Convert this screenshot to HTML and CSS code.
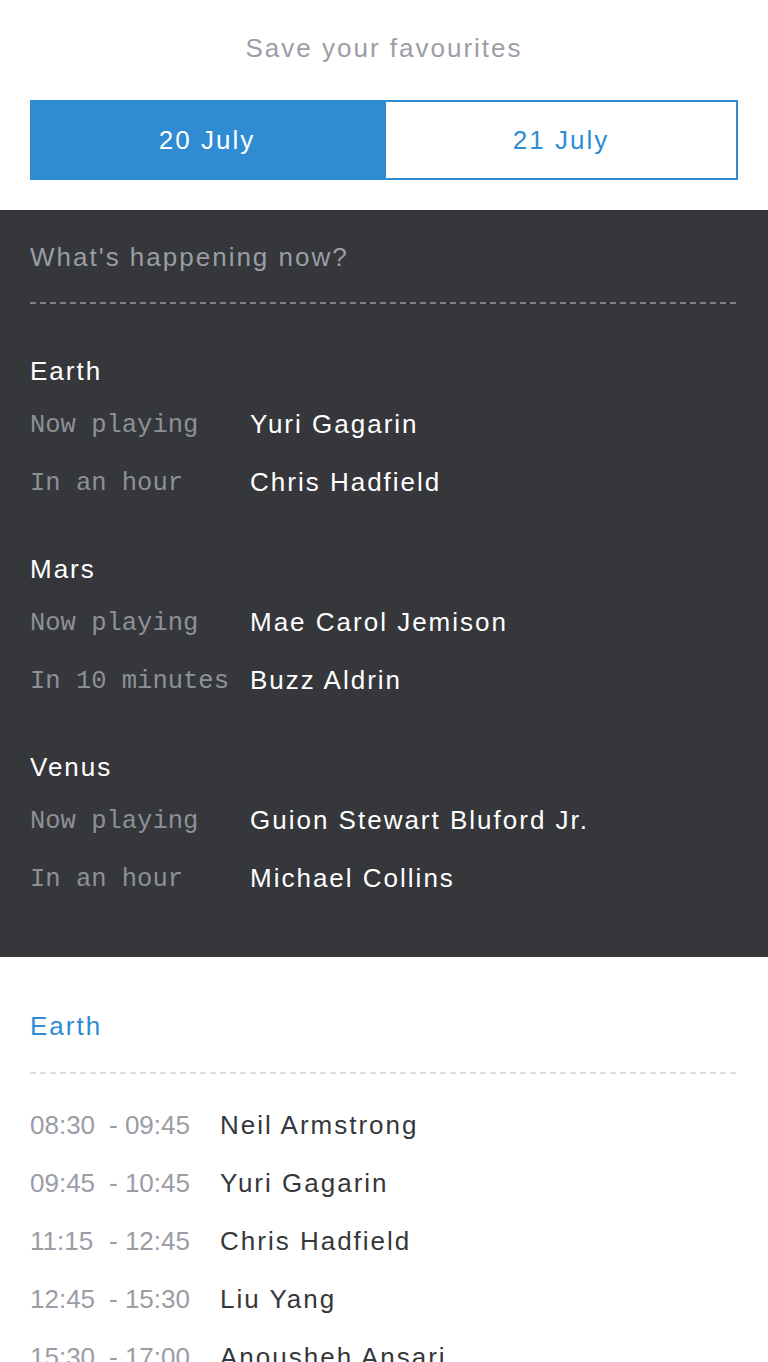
FILE: index.html
```html
<!DOCTYPE html>
<html lang="en">
<head>
<meta charset="utf-8">
<title>Save your favourites</title>
<link rel="stylesheet" href="styles.css">
</head>
<body>
<header class="top">
  <h1 class="top-title">Save your favourites</h1>
  <nav class="tabs">
    <button class="tab tab-active">20 July</button>
    <button class="tab">21 July</button>
  </nav>
</header>

<section class="now">
  <h2 class="now-title">What's happening now?</h2>
  <div class="dash dash-dark"></div>

  <div class="group">
    <h3 class="group-title">Earth</h3>
    <div class="now-row"><span class="label">Now playing</span><span class="who">Yuri Gagarin</span></div>
    <div class="now-row"><span class="label">In an hour</span><span class="who">Chris Hadfield</span></div>
  </div>

  <div class="group">
    <h3 class="group-title">Mars</h3>
    <div class="now-row"><span class="label">Now playing</span><span class="who">Mae Carol Jemison</span></div>
    <div class="now-row"><span class="label">In 10 minutes</span><span class="who">Buzz Aldrin</span></div>
  </div>

  <div class="group">
    <h3 class="group-title">Venus</h3>
    <div class="now-row"><span class="label">Now playing</span><span class="who">Guion Stewart Bluford Jr.</span></div>
    <div class="now-row"><span class="label">In an hour</span><span class="who">Michael Collins</span></div>
  </div>
</section>

<section class="schedule">
  <h2 class="schedule-title">Earth</h2>
  <div class="dash dash-light"></div>
  <div class="slot"><span class="time"><span class="start">08:30</span><span class="end">- 09:45</span></span><span class="name">Neil Armstrong</span></div>
  <div class="slot"><span class="time"><span class="start">09:45</span><span class="end">- 10:45</span></span><span class="name">Yuri Gagarin</span></div>
  <div class="slot"><span class="time"><span class="start">11:15</span><span class="end">- 12:45</span></span><span class="name">Chris Hadfield</span></div>
  <div class="slot"><span class="time"><span class="start">12:45</span><span class="end">- 15:30</span></span><span class="name">Liu Yang</span></div>
  <div class="slot"><span class="time"><span class="start">15:30</span><span class="end">- 17:00</span></span><span class="name">Anousheh Ansari</span></div>
</section>
</body>
</html>
```

FILE: styles.css
```css
* {
  box-sizing: border-box;
}

html, body {
  margin: 0;
  padding: 0;
}

body {
  font-family: "Liberation Sans", Arial, sans-serif;
  font-size: 26px;
  letter-spacing: 2px;
  background: #ffffff;
  color: #34373b;
}

h1, h2, h3 {
  margin: 0;
  font-weight: normal;
  font-size: 26px;
}

.top {
  padding: 30px 30px 30px;
}

.top-title {
  line-height: 36px;
  text-align: center;
  color: #9b9ea6;
  margin-bottom: 34px;
}

.tabs {
  display: grid;
  grid-template-columns: 1fr 1fr;
}

.tab {
  height: 80px;
  border: 2px solid #2f8cd3;
  background: #ffffff;
  color: #2f8cd3;
  font-family: inherit;
  font-size: 26px;
  letter-spacing: 2px;
  padding: 0;
  margin: 0;
}

.tab-active {
  background: #2f8cd3;
  color: #ffffff;
}

.now {
  background: #35373b;
  padding: 29px 30px 50px;
  color: #ffffff;
}

.now-title {
  line-height: 36px;
  color: #9a9da5;
}

.dash {
  height: 2px;
}

.dash-dark {
  background-image: repeating-linear-gradient(to right, #7c7f85 0 6px, transparent 6px 10px);
  margin: 27px 0 49px;
}

.dash-light {
  background-image: repeating-linear-gradient(to right, #dcdde0 0 6px, transparent 6px 10px);
  margin: 28px 0 22px;
}

.group + .group {
  margin-top: 40px;
}

.group-title {
  line-height: 36px;
  margin-bottom: 6px;
  color: #ffffff;
}

.now-row {
  display: grid;
  grid-template-columns: 220px 1fr;
  line-height: 58px;
  height: 58px;
}

.label {
  font-family: "Liberation Mono", "Courier New", monospace;
  font-size: 25.5px;
  letter-spacing: 0;
  color: #8d9098;
  padding-top: 2px;
}

.who {
  color: #ffffff;
}

.schedule {
  padding: 51px 30px 40px;
}

.schedule-title {
  line-height: 36px;
  color: #2f8cd3;
}

.slot {
  display: grid;
  grid-template-columns: 190px 1fr;
  line-height: 58px;
  height: 58px;
}

.time {
  letter-spacing: 0;
  color: #9a9da5;
  white-space: nowrap;
}

.start {
  display: inline-block;
  width: 79px;
}

.name {
  color: #34373b;
}
```
